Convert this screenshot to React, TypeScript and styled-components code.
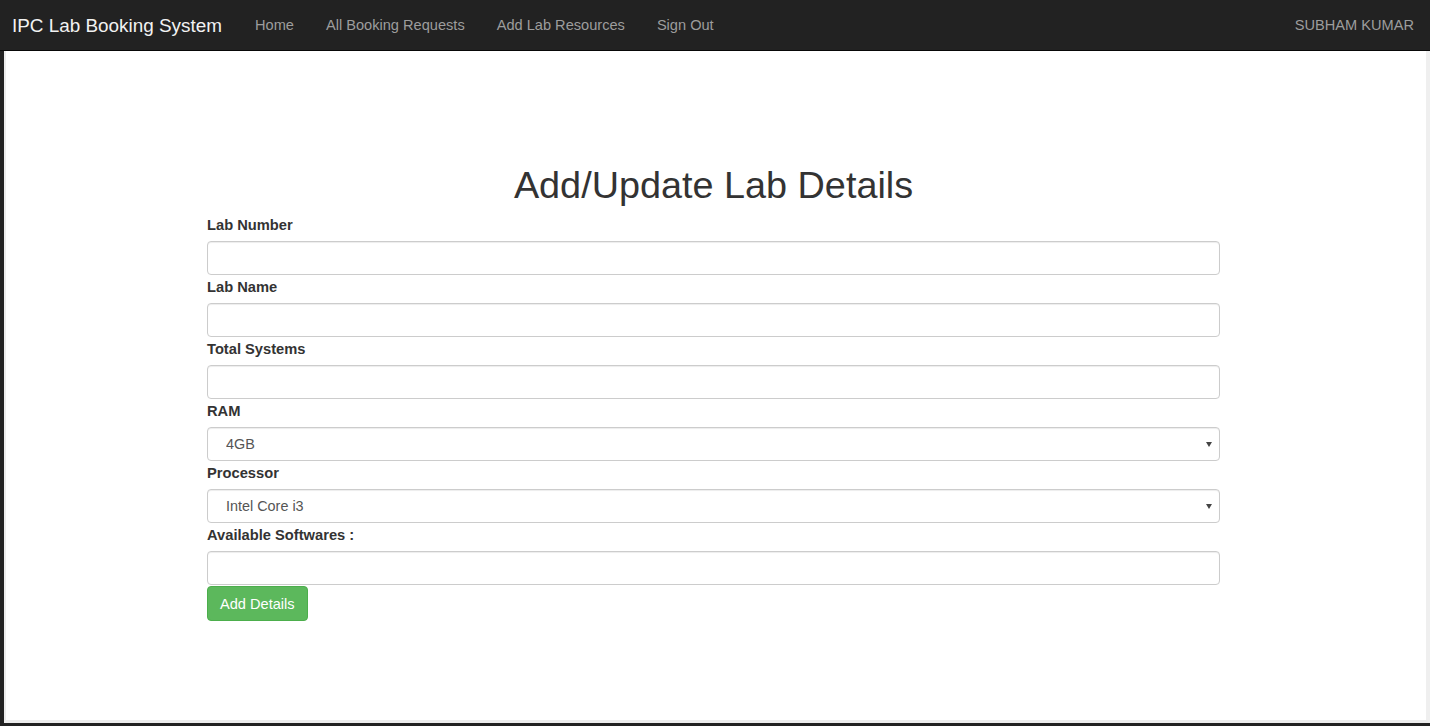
import React from "react";
import styled, { createGlobalStyle } from "styled-components";

const Global = createGlobalStyle`
  html, body { margin: 0; padding: 0; }
  body {
    background: #222;
    font-family: "Liberation Sans", Arial, Helvetica, sans-serif;
    font-size: 14px;
    line-height: 1.42857;
    color: #333;
  }
  * { box-sizing: border-box; }
`;

const Page = styled.div`
  width: 1430px;
  height: 726px;
  display: flex;
  flex-direction: column;
  background: #222;
  overflow: hidden;
`;

const NavBar = styled.nav`
  height: 51px;
  flex: 0 0 51px;
  background: #222;
  border-bottom: 1px solid #080808;
  display: flex;
  align-items: center;
  padding: 0 16px 0 12px;
`;

const Brand = styled.a`
  font-size: 18.9px;
  color: #f2f2f2;
  text-decoration: none;
  margin-right: 17px;
`;

const NavLink = styled.a<{ $last?: boolean }>`
  font-size: 14.6px;
  color: #9d9d9d;
  text-decoration: none;
  padding: ${(p) => (p.$last ? "0 0 0 16px" : "0 16px")};
`;

const Spacer = styled.div`
  flex: 1;
`;

const Frame = styled.div`
  flex: 1;
  display: flex;
  padding: 0 0 3px 4px;
`;

const Content = styled.main`
  flex: 1;
  background: #fff;
  border-left: 2px solid #ececec;
  border-bottom: 3px solid #ececec;
  border-right: 4px solid #efefef;
  padding-top: 114px;
`;

const FormWrap = styled.form`
  width: 1013px;
  margin-left: 201px;
  display: flex;
  flex-direction: column;
`;

const Title = styled.h1`
  font-size: 37.8px;
  font-weight: 500;
  line-height: 40px;
  color: #333;
  text-align: center;
  margin: 0 0 10px;
`;

const Label = styled.label<{ $first?: boolean }>`
  display: block;
  font-weight: bold;
  font-size: 14.7px;
  line-height: 20px;
  margin: ${(p) => (p.$first ? "0" : "2px")} 0 6px;
  color: #333;
`;

const Input = styled.input`
  display: block;
  width: 100%;
  height: 34px;
  padding: 6px 12px;
  font-size: 14px;
  font-family: inherit;
  color: #555;
  background: #fff;
  border: 1px solid #ccc;
  border-radius: 4px;
  box-shadow: inset 0 1px 1px rgba(0, 0, 0, 0.075);
  outline: none;
`;

const SelectBox = styled.div`
  position: relative;
  width: 100%;
  height: 34px;
  &::after {
    content: "";
    position: absolute;
    right: 8px;
    top: 15px;
    border-left: 3px solid transparent;
    border-right: 3px solid transparent;
    border-top: 5px solid #444;
    pointer-events: none;
  }
`;

const Select = styled.select`
  display: block;
  width: 100%;
  height: 34px;
  padding: 6px 12px 6px 18px;
  font-size: 14.4px;
  font-family: inherit;
  color: #555;
  background: #fff;
  border: 1px solid #ccc;
  border-radius: 4px;
  box-shadow: inset 0 1px 1px rgba(0, 0, 0, 0.075);
  appearance: none;
  -webkit-appearance: none;
  outline: none;
`;

const Button = styled.button`
  align-self: flex-start;
  margin-top: 1px;
  height: 35px;
  padding: 6px 12px;
  font-size: 14.6px;
  font-family: inherit;
  color: #fff;
  background: #5cb85c;
  border: 1px solid #4cae4c;
  border-radius: 4px;
  cursor: pointer;
`;

export default function App() {
  return (
    <>
      <Global />
      <Page>
        <NavBar>
          <Brand href="#">IPC Lab Booking System</Brand>
          <NavLink href="#">Home</NavLink>
          <NavLink href="#">All Booking Requests</NavLink>
          <NavLink href="#">Add Lab Resources</NavLink>
          <NavLink href="#">Sign Out</NavLink>
          <Spacer />
          <NavLink href="#" $last>SUBHAM KUMAR</NavLink>
        </NavBar>
        <Frame>
          <Content>
            <FormWrap onSubmit={(e) => e.preventDefault()}>
              <Title>Add/Update Lab Details</Title>
              <Label $first>Lab Number</Label>
              <Input type="text" />
              <Label>Lab Name</Label>
              <Input type="text" />
              <Label>Total Systems</Label>
              <Input type="text" />
              <Label>RAM</Label>
              <SelectBox>
                <Select defaultValue="4GB">
                  <option>4GB</option>
                  <option>8GB</option>
                  <option>16GB</option>
                </Select>
              </SelectBox>
              <Label>Processor</Label>
              <SelectBox>
                <Select defaultValue="Intel Core i3">
                  <option>Intel Core i3</option>
                  <option>Intel Core i5</option>
                  <option>Intel Core i7</option>
                </Select>
              </SelectBox>
              <Label>Available Softwares :</Label>
              <Input type="text" />
              <Button type="submit">Add Details</Button>
            </FormWrap>
          </Content>
        </Frame>
      </Page>
    </>
  );
}
